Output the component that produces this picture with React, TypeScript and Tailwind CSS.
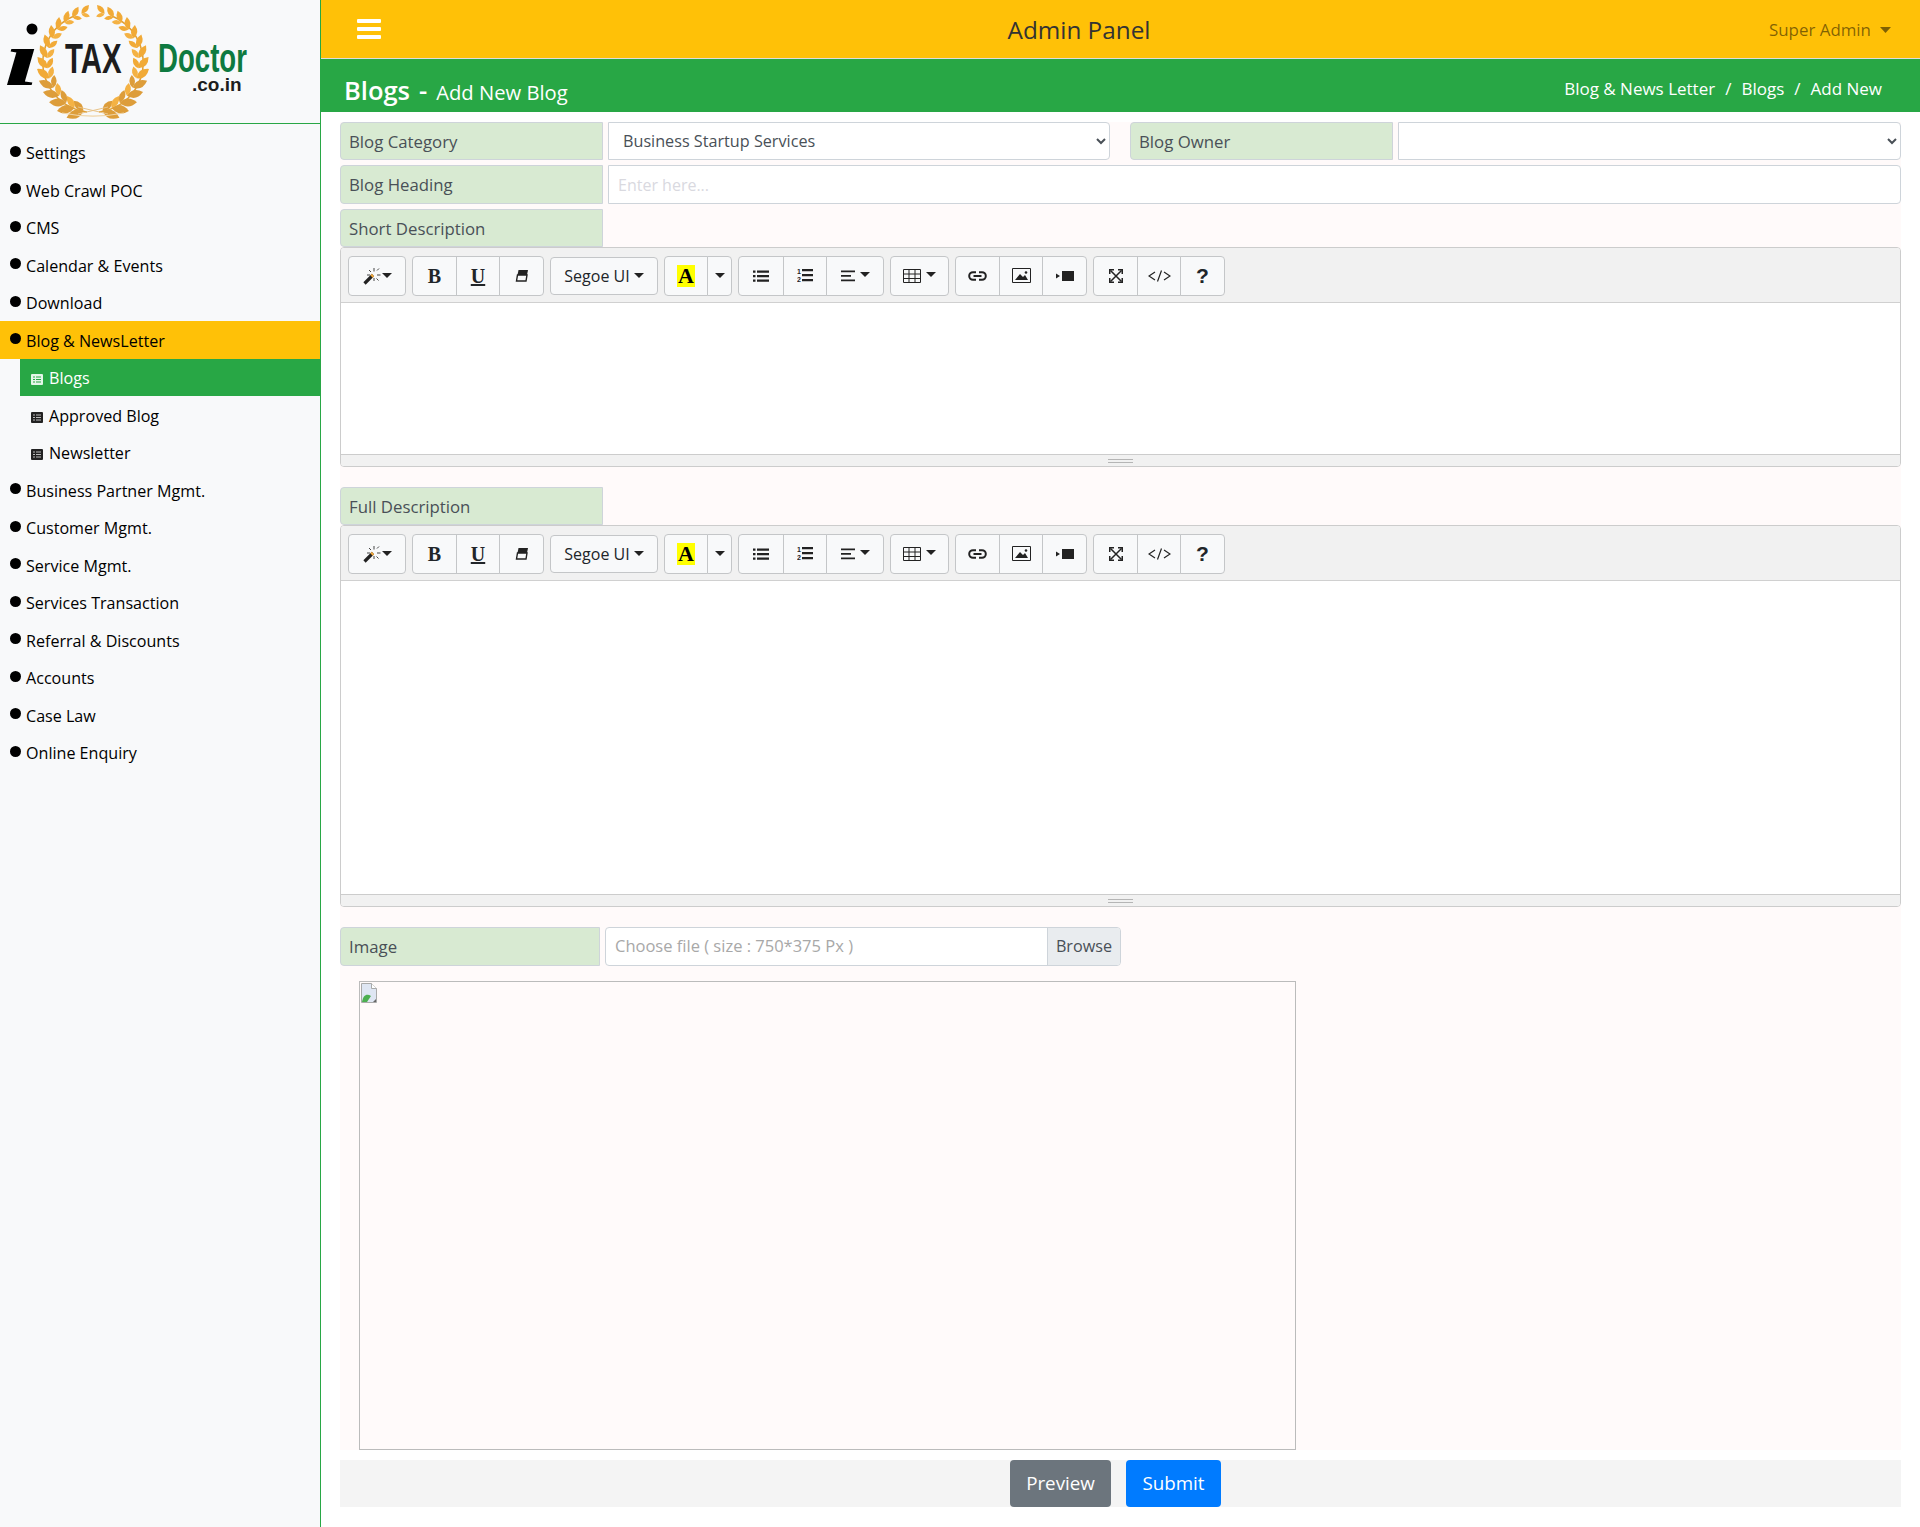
import React from 'react';

const menu = [
  { label: 'Settings' },
  { label: 'Web Crawl POC' },
  { label: 'CMS' },
  { label: 'Calendar & Events' },
  { label: 'Download' },
  { label: 'Blog & NewsLetter', active: true },
  { label: 'Blogs', sub: true, active: true },
  { label: 'Approved Blog', sub: true },
  { label: 'Newsletter', sub: true },
  { label: 'Business Partner Mgmt.' },
  { label: 'Customer Mgmt.' },
  { label: 'Service Mgmt.' },
  { label: 'Services Transaction' },
  { label: 'Referral & Discounts' },
  { label: 'Accounts' },
  { label: 'Case Law' },
  { label: 'Online Enquiry' },
];

const Caret = () => (
  <svg width="10" height="5" viewBox="0 0 10 5" className="shrink-0">
    <path d="M0 0h10L5 5z" fill="#222" />
  </svg>
);

const Branch = () => (
  <g>
    <path d="M99 112A50 50 0 0 0 112 16" fill="none" stroke="#e0a035" strokeWidth="1.5" />
    {Array.from({ length: 14 }).map((_, i) => {
      const deg = 12 + i * 11.8;
      const a = (deg * Math.PI) / 180;
      const x = 93 + 46 * Math.sin(a);
      const y = 62 + 50 * Math.cos(a);
      const s = 1.4 - i * 0.04;
      const fill = i < 5 ? '#dd9d3a' : '#f1aa37';
      return (
        <g key={i}>
          <path d="M0 0Q6-6 13 0Q6 6 0 0z" fill={fill} transform={`translate(${x} ${y}) rotate(${-deg + 34}) scale(${s})`} />
          <path d="M0 0Q6-5.500 12 0Q6 5.500 0 0z" fill={i % 2 ? '#f4b244' : fill} transform={`translate(${x} ${y}) rotate(${-deg - 34}) scale(${s * 0.85})`} />
        </g>
      );
    })}
  </g>
);

const Logo = () => (
  <svg width="260" height="123" viewBox="0 0 260 123">
    <Branch />
    <g transform="translate(186 0) scale(-1 1)">
      <Branch />
    </g>
    <path d="M62 113c20 4 42 4 62 0" stroke="#efd4a6" strokeWidth="1.2" fill="none" />
    <path d="M78 107l30 7M108 107l-30 7" stroke="#e9c489" strokeWidth="1" />
    <text transform="translate(65 73) scale(.7 1)" fontFamily="Liberation Sans" fontWeight="700" fontSize="42" fill="#1d1d1d">TAX</text>
    <text transform="translate(158 72) scale(.69 1)" fontFamily="Liberation Sans" fontWeight="700" fontSize="40" fill="#0e7a40">Doctor</text>
    <text x="192" y="91" fontFamily="Liberation Sans" fontWeight="700" fontSize="19" fill="#1d1d1d">.co.in</text>
    <circle cx="32" cy="29" r="5.500" fill="#000" />
    <text transform="translate(4 85) scale(1.65 1)" fontFamily="Liberation Serif" fontWeight="700" fontStyle="italic" fontSize="78" fill="#000">ı</text>
  </svg>
);

const TableIcon = ({ light }: { light?: boolean }) => (
  <svg width="12" height="11" viewBox="0 0 12 11" className="mt-[3px] shrink-0">
    <rect width="12" height="11" rx="1" fill={light ? '#e4f6e8' : '#222'} />
    <path d="M2 3h2M5 3h5M2 5.500h2M5 5.500h5M2 8h2M5 8h5" stroke={light ? '#28a745' : '#bbb'} strokeWidth="1" />
  </svg>
);

const Sidebar = () => (
  <aside className="w-[321px] shrink-0 border-r border-[#28a745] bg-[#f8f9fa]">
    <div className="h-[124px] border-b border-[#28a745]">
      <Logo />
    </div>
    <ul className="pt-[9.5px] text-[16.1px] text-black">
      {menu.map((m) =>
        m.sub ? (
          <li
            key={m.label}
            className={`ml-[20px] flex h-[37.5px] items-center gap-[6px] pl-[11px] pt-[2px] ${m.active ? 'bg-[#28a745] text-white' : ''}`}
          >
            <TableIcon light={m.active} />
            {m.label}
          </li>
        ) : (
          <li
            key={m.label}
            className={`flex h-[37.5px] items-center gap-[5px] pl-[10px] pt-[2px] ${m.active ? 'bg-[#ffc107]' : ''}`}
          >
            <span className="mb-[4px] h-[11px] w-[11px] rounded-full bg-black" />
            {m.label}
          </li>
        ),
      )}
    </ul>
  </aside>
);

const Btn = ({ w, h = 'h-[40px]', children }: { w: string; h?: string; children: React.ReactNode }) => (
  <div className={`-ml-px flex items-center justify-center gap-[1px] border border-[#c4c6c8] bg-[#f8f9fa] text-[#212529] first:ml-0 first:rounded-l-[4px] last:rounded-r-[4px] ${w} ${h}`}>
    {children}
  </div>
);

const Group = ({ children }: { children: React.ReactNode }) => <div className="flex items-center">{children}</div>;

const Ico = ({ children, w = 16, h = 16 }: { children: React.ReactNode; w?: number; h?: number }) => (
  <svg width={w} height={h} viewBox={`0 0 ${w} ${h}`} fill="#222">
    {children}
  </svg>
);

const Toolbar = () => (
  <div className="flex h-[55px] items-center gap-[6px] border-b border-[#d0d0d0] bg-[#f1f1f1] pl-[7px] pt-px">
    <Group>
      <Btn w="w-[58px]">
        <Ico w={18} h={18}>
          <path d="M1.500 16.500L10 8" stroke="#222" strokeWidth="3.200" fill="none" />
          <path d="M8.500 9.500L10 8" stroke="#f4a93a" strokeWidth="3.200" fill="none" />
          <path d="M11 1v3.500M11 11v3M14 8h3.500M4 8h3M14 3.500l2-2M13.500 11.500l2 2M6 3l2 2" stroke="#444" strokeWidth="1" fill="none" />
        </Ico>
        <Caret />
      </Btn>
    </Group>
    <Group>
      <Btn w="w-[45px]">
        <span className="font-['Liberation_Serif'] text-[20px] font-bold">B</span>
      </Btn>
      <Btn w="w-[44px]">
        <span className="font-['Liberation_Serif'] text-[20px] font-bold underline">U</span>
      </Btn>
      <Btn w="w-[45px]">
        <Ico w={14} h={13}>
          <path d="M3.500 1H13l-1 5H2.500z" />
          <path d="M2.500 6H12l-1 6H1.500z" fill="none" stroke="#222" strokeWidth="1.400" />
        </Ico>
      </Btn>
    </Group>
    <Group>
      <Btn w="w-[108px]" h="h-[38px]">
        <span className="mr-[3px] text-[16px]">Segoe UI</span>
        <Caret />
      </Btn>
    </Group>
    <Group>
      <Btn w="w-[44px]">
        <span className="bg-[#ffff00] px-px font-['Liberation_Serif'] text-[22px] leading-[22px] font-bold text-black">A</span>
      </Btn>
      <Btn w="w-[25px]">
        <Caret />
      </Btn>
    </Group>
    <Group>
      <Btn w="w-[46px]">
        <Ico>
          <path d="M4 2.500h12v2.200H4zM4 7h12v2.200H4zM4 11.500h12v2.200H4zM0 2.500h2.500v2.200H0zM0 7h2.500v2.200H0zM0 11.500h2.500v2.200H0z" />
        </Ico>
      </Btn>
      <Btn w="w-[44px]">
        <Ico h={17}>
          <path d="M5 2h11v2.200H5zM5 7h11v2.200H5zM5 12h11v2.200H5z" />
          <text x="0" y="7" fontSize="7" fontWeight="700" fontFamily="Liberation Sans">1</text>
          <text x="0" y="15" fontSize="7" fontWeight="700" fontFamily="Liberation Sans">2</text>
        </Ico>
      </Btn>
      <Btn w="w-[58px]">
        <Ico>
          <path d="M1 2.500h14v1.800H1zM1 7h10v1.800H1zM1 11.500h14v1.800H1z" />
        </Ico>
        <span className="ml-[3px] mb-[3px]"><Caret /></span>
      </Btn>
    </Group>
    <Group>
      <Btn w="w-[59px]">
        <Ico w={18} h={14}>
          <path d="M.5.500h17v13H.5zM6 .5v13M12 .5v13M.5 5h17M.5 9.500h17" fill="none" stroke="#222" />
        </Ico>
        <span className="ml-[4px] mb-[3px]"><Caret /></span>
      </Btn>
    </Group>
    <Group>
      <Btn w="w-[45px]">
        <Ico w={19} h={12}>
          <path d="M8 2.200H5a3.800 3.800 0 0 0 0 7.600h3M11 2.200h3a3.800 3.800 0 0 1 0 7.600h-3M5.500 6h8" fill="none" stroke="#222" strokeWidth="2" />
        </Ico>
      </Btn>
      <Btn w="w-[44px]">
        <Ico w={19} h={15}>
          <path d="M.5.500h18v14H.5z" fill="none" stroke="#222" />
          <path d="M3 12l5-6 3 3 2-2 3 5z" />
          <circle cx="14" cy="4.500" r="1.300" />
        </Ico>
      </Btn>
      <Btn w="w-[45px]">
        <Ico w={18} h={12}>
          <path d="M6 1h12v10H6zM0 3.500l4 2.500-4 2.500z" />
        </Ico>
      </Btn>
    </Group>
    <Group>
      <Btn w="w-[45px]">
        <Ico>
          <path d="M2.500 2.500l11 11M13.500 2.500l-11 11" stroke="#222" strokeWidth="1.500" fill="none" />
          <path d="M1 1h5v1.500H2.500V6H1zM15 1v5h-1.500V2.500H10V1zM1 15v-5h1.500v3.500H6V15zM15 15h-5v-1.500h3.500V10H15z" />
        </Ico>
      </Btn>
      <Btn w="w-[44px]">
        <Ico w={23} h={12}>
          <path d="M7 2L1 6l6 4M16 2l6 4-6 4M13.500 .5l-4 11" fill="none" stroke="#222" strokeWidth="1.200" />
        </Ico>
      </Btn>
      <Btn w="w-[45px]">
        <span className="font-['Liberation_Sans'] text-[21px] font-bold">?</span>
      </Btn>
    </Group>
  </div>
);

const Editor = ({ area }: { area: string }) => (
  <div className="overflow-hidden rounded-[4px] border border-[#cccccc] bg-white">
    <Toolbar />
    <div className={area} />
    <div className="flex h-[12px] flex-col items-center justify-center gap-[2px] border-t border-[#cccccc] bg-[#f1f1f1]">
      <span className="h-px w-[25px] bg-[#b5b5b5]" />
      <span className="h-px w-[25px] bg-[#b5b5b5]" />
    </div>
  </div>
);

const Label = ({ w = 'w-[263px]', h = 'h-[38px]', children }: { w?: string; h?: string; children: React.ReactNode }) => (
  <div className={`flex shrink-0 items-center rounded-l-[4px] border border-[#ced4da] bg-[#d8ead2] pl-[8px] pt-[1px] text-[16.8px] text-[#495057] ${w} ${h}`}>
    {children}
  </div>
);

const selectCls =
  'h-[38px] w-full rounded-r-[4px] border border-[#ced4da] bg-white pl-[10px] pr-[4px] text-[16.2px] text-[#495057]';

const App = () => (
  <div className="flex h-[1527px] w-full bg-white font-['Open_Sans',sans-serif] text-[16px]">
    <Sidebar />
    <main className="min-w-0 flex-1">
      <header className="flex h-[59px] items-center justify-between border-b border-[#dddddd] bg-[#ffc107] pl-[36px] pr-[29px]">
        <div className="flex w-[24px] flex-col gap-[4px]">
          <span className="h-[4px] rounded-[1px] bg-white" />
          <span className="h-[4px] rounded-[1px] bg-white" />
          <span className="h-[4px] rounded-[1px] bg-white" />
        </div>
        <h1 className="ml-[8px] pt-[2px] text-[24.3px] font-medium text-[#333]">Admin Panel</h1>
        <div className="flex items-center gap-[9px] pt-[2px] text-[16.9px] text-black/50">
          Super Admin
          <svg width="11" height="6" viewBox="0 0 11 6"><path d="M0 0h11L5.500 6z" fill="rgba(0,0,0,.5)" /></svg>
        </div>
      </header>
      <div className="flex h-[53px] items-end justify-between bg-[#28a745] pb-[3px] pl-[23px] pr-[38px] text-white">
        <div className="flex items-baseline gap-[9px]">
          <span className="text-[25.5px] font-semibold">Blogs</span>
          <span className="text-[25.5px] font-semibold">-</span>
          <span className="text-[20.2px]">Add New Blog</span>
        </div>
        <div className="mb-[8px] flex gap-[10px] text-[17px]">
          <span>Blog &amp; News Letter</span>
          <span>/</span>
          <span>Blogs</span>
          <span>/</span>
          <span>Add New</span>
        </div>
      </div>

      <form className="ml-[19px] mr-[19px] mt-[10px] bg-[#fffafa]">
        <div className="flex">
          <div className="flex w-[770px] gap-[5px]">
            <Label>Blog Category</Label>
            <select className={selectCls} defaultValue="b">
              <option value="b">Business Startup Services</option>
            </select>
          </div>
          <div className="ml-[20px] flex flex-1 gap-[5px]">
            <Label>Blog Owner</Label>
            <select className={selectCls} />
          </div>
        </div>
        <div className="mt-[5px] flex gap-[5px]">
          <Label h="h-[39px]">Blog Heading</Label>
          <input
            className="h-[39px] w-full rounded-r-[4px] border border-[#ced4da] bg-white pl-[9px] placeholder:text-[#d9d9df]"
            placeholder="Enter here..."
          />
        </div>
        <div className="mt-[5px]">
          <Label>Short Description</Label>
        </div>
        <Editor area="h-[151px]" />
        <div className="mt-[20px]">
          <Label>Full Description</Label>
        </div>
        <Editor area="h-[313px]" />
        <div className="mt-[20px] flex gap-[5px]">
          <Label w="w-[260px]" h="h-[39px]">Image</Label>
          <div className="flex h-[39px] w-[516px] items-center justify-between overflow-hidden rounded-[4px] border border-[#ced4da] bg-white pl-[9px] text-[16.5px] text-[#a8a8a8]">
            Choose file ( size : 750*375 Px )
            <span className="flex h-full w-[73px] items-center justify-center border-l border-[#ced4da] bg-[#e9ecef] text-[16.2px] text-[#495057]">
              Browse
            </span>
          </div>
        </div>
        <div className="ml-[19px] mt-[15px] h-[469px] w-[937px] border border-[#bbbbbb] pl-px pt-px">
          <svg width="16" height="20" viewBox="0 0 16 20">
            <path d="M.5.500h10l5 5v14H.5z" fill="#dfe6f3" stroke="#a9a9a9" />
            <path d="M10.500.5v5h5" fill="#fff" stroke="#a9a9a9" />
            <path d="M1 19c1-7 5-9 9-6l-4 6z" fill="#4caf50" />
            <path d="M12 19l3-3v3z" fill="#666" />
          </svg>
        </div>
      </form>
      <div className="ml-[19px] mr-[19px] mt-[10px] flex h-[47px] justify-center gap-[15px] bg-[#f4f4f4] pr-[10px]">
        <button className="w-[101px] rounded-[4px] bg-[#6c757d] text-[18.8px] text-white">Preview</button>
        <button className="w-[95px] rounded-[4px] bg-[#007bff] text-[18.8px] text-white">Submit</button>
      </div>
    </main>
  </div>
);

export default App;
